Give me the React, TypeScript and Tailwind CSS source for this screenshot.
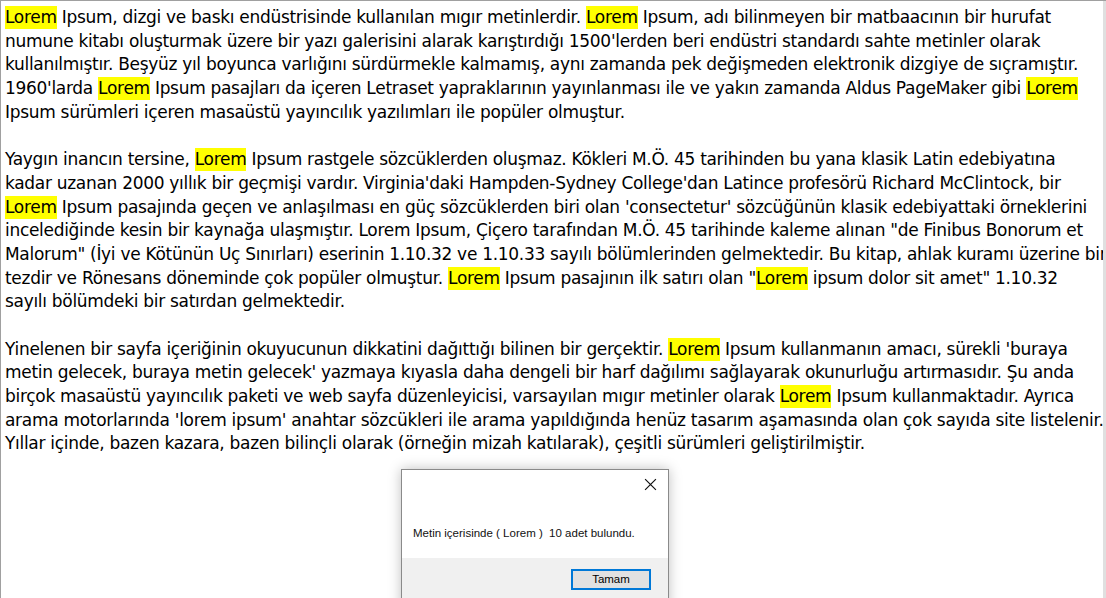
import React from "react";

const lines: string[] = [
  "Lorem Ipsum, dizgi ve baskı endüstrisinde kullanılan mıgır metinlerdir. Lorem Ipsum, adı bilinmeyen bir matbaacının bir hurufat",
  "numune kitabı oluşturmak üzere bir yazı galerisini alarak karıştırdığı 1500'lerden beri endüstri standardı sahte metinler olarak",
  "kullanılmıştır. Beşyüz yıl boyunca varlığını sürdürmekle kalmamış, aynı zamanda pek değişmeden elektronik dizgiye de sıçramıştır.",
  "1960'larda Lorem Ipsum pasajları da içeren Letraset yapraklarının yayınlanması ile ve yakın zamanda Aldus PageMaker gibi Lorem",
  "Ipsum sürümleri içeren masaüstü yayıncılık yazılımları ile popüler olmuştur.",
  "",
  "Yaygın inancın tersine, Lorem Ipsum rastgele sözcüklerden oluşmaz. Kökleri M.Ö. 45 tarihinden bu yana klasik Latin edebiyatına",
  "kadar uzanan 2000 yıllık bir geçmişi vardır. Virginia'daki Hampden-Sydney College'dan Latince profesörü Richard McClintock, bir",
  "Lorem Ipsum pasajında geçen ve anlaşılması en güç sözcüklerden biri olan 'consectetur' sözcüğünün klasik edebiyattaki örneklerini",
  "incelediğinde kesin bir kaynağa ulaşmıştır. L~orem Ipsum, Çiçero tarafından M.Ö. 45 tarihinde kaleme alınan \"de Finibus Bonorum et",
  "Malorum\" (İyi ve Kötünün Uç Sınırları) eserinin 1.10.32 ve 1.10.33 sayılı bölümlerinden gelmektedir. Bu kitap, ahlak kuramı üzerine bir",
  "tezdir ve Rönesans döneminde çok popüler olmuştur. Lorem Ipsum pasajının ilk satırı olan \"Lorem ipsum dolor sit amet\" 1.10.32",
  "sayılı bölümdeki bir satırdan gelmektedir.",
  "",
  "Yinelenen bir sayfa içeriğinin okuyucunun dikkatini dağıttığı bilinen bir gerçektir. Lorem Ipsum kullanmanın amacı, sürekli 'buraya",
  "metin gelecek, buraya metin gelecek' yazmaya kıyasla daha dengeli bir harf dağılımı sağlayarak okunurluğu artırmasıdır. Şu anda",
  "birçok masaüstü yayıncılık paketi ve web sayfa düzenleyicisi, varsayılan mıgır metinler olarak Lorem Ipsum kullanmaktadır. Ayrıca",
  "arama motorlarında 'lorem ipsum' anahtar sözcükleri ile arama yapıldığında henüz tasarım aşamasında olan çok sayıda site listelenir.",
  "Yıllar içinde, bazen kazara, bazen bilinçli olarak (örneğin mizah katılarak), çeşitli sürümleri geliştirilmiştir.",
];

function Line({ text }: { text: string }) {
  if (!text) return <div className="h-[23.7px]" />;
  const parts = text.split(/(Lorem)/);
  return (
    <div className="h-[23.7px] whitespace-pre">
      {parts.map((p, i) =>
        p === "Lorem" ? (
          <span key={i} className="bg-[#ffff00] inline-block h-[23px] align-top">Lorem</span>
        ) : (
          <span key={i}>{p.replace("~", "")}</span>
        )
      )}
    </div>
  );
}

export default function App() {
  return (
    <div className="w-[1106px] h-[598px] bg-white overflow-hidden relative border-t border-l border-[#a0a0a0]">
      <div
        className="flex flex-col pl-[4px] pt-[5px] text-[17px] leading-[23.7px] text-black tracking-[-0.3px]"
        style={{ fontFamily: '"DejaVu Sans", Verdana, sans-serif' }}
      >
        {lines.map((l, i) => (
          <Line key={i} text={l} />
        ))}
      </div>
      <div className="absolute right-0 top-0 bottom-0 w-[3px] bg-[#e0e0e0]" />
      <div
        className="absolute left-[400px] top-[468px] w-[268px] h-[140px] bg-white border border-[#8a8a8a] shadow-[0_0_12px_rgba(0,0,0,0.25)] flex flex-col"
        style={{ fontFamily: '"Liberation Sans", Arial, sans-serif' }}
      >
        <div className="h-[88px] flex flex-col px-[11px]">
          <div className="flex justify-end pt-[8px] pr-[-2px]">
            <svg width="13" height="13" viewBox="0 0 12 12">
              <path d="M1 1L11 11M11 1L1 11" stroke="#111" strokeWidth="1.1" />
            </svg>
          </div>
          <div className="pt-[34px] text-[11.5px] text-[#111]">
            Metin içerisinde ( Lorem )&nbsp; 10 adet bulundu.
          </div>
        </div>
        <div className="flex-1 bg-[#f0f0f0] flex justify-end items-start pt-[11px] pr-[17px]">
          <div className="w-[80px] h-[21px] border-2 border-[#0078d7] bg-[#e1e1e1] flex items-center justify-center text-[11.5px] text-black">
            Tamam
          </div>
        </div>
      </div>
    </div>
  );
}
